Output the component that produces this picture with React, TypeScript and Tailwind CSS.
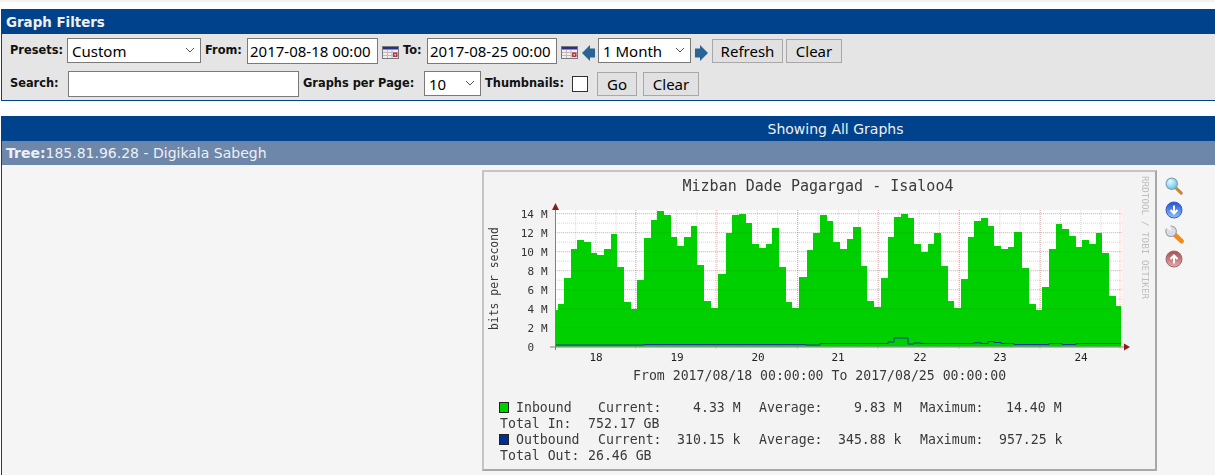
// Cacti graph view: filter panel, tree header and one RRD graph

// ---------------------------------------------------------------------------
// Graph data (segment end x, top y)
// ---------------------------------------------------------------------------

const INBOUND: [number, number][] = [
  [558, 310], [564, 304], [571, 278], [577, 249], [584, 240], [591, 242], [597, 253], [604, 255],
  [611, 249], [617, 234], [624, 267], [631, 302], [637, 309], [644, 280], [651, 238], [657, 220],
  [664, 211], [671, 215], [677, 237], [684, 246], [691, 237], [697, 226], [704, 265], [711, 301],
  [718, 308], [726, 274], [732, 233], [739, 215], [746, 214], [752, 223], [759, 244], [766, 248],
  [772, 244], [779, 228], [786, 267], [792, 302], [799, 308], [807, 277], [813, 250], [820, 233],
  [827, 215], [833, 221], [840, 242], [847, 249], [853, 239], [861, 227], [867, 266], [874, 301],
  [881, 307], [888, 278], [894, 237], [901, 217], [908, 214], [914, 218], [921, 244], [928, 252],
  [934, 244], [941, 233], [948, 266], [954, 301], [961, 308], [968, 279], [974, 237], [981, 221],
  [988, 218], [994, 226], [1001, 246], [1008, 249], [1014, 247], [1022, 232], [1029, 268], [1036, 304],
  [1042, 310], [1049, 287], [1056, 249], [1062, 224], [1069, 229], [1076, 236], [1082, 247], [1089, 240],
  [1096, 244], [1102, 233], [1109, 253], [1116, 296], [1121, 306],
];

const OUTBOUND: [number, number][] = [
  [644, 345], [806, 344.5], [820, 345], [888, 343.5], [894, 342], [901, 338], [908, 338], [914, 344],
  [921, 343], [974, 343.5], [981, 342.8], [988, 343.5], [994, 341.5], [1001, 342.5], [1014, 343.5],
  [1049, 344.5], [1062, 343.5], [1076, 344.5], [1121, 343.5],
];

const stepPath = (points: [number, number][]) => {
  let x = 555.5;
  return points.map(([end, y]) => {
    const seg = `L${x} ${y} L${end} ${y}`;
    x = end;
    return seg;
  }).join(' ');
};

const Y_TICKS = [0, 2, 4, 6, 8, 10, 12, 14];
const DAYS = [[18, 596], [19, 677], [20, 758], [21, 838], [22, 920], [23, 1000], [24, 1081]];
const MAJOR_X = [555.5, 635.5, 716, 797.5, 878, 959, 1040, 1120];
const PLOT_BOTTOM = 346.7;
const yFor = (m: number) => PLOT_BOTTOM - m * 9.5;

const MONO = "'DejaVu Sans Mono', 'Liberation Mono', monospace";

function Legend({ x, y, children, fill = '#3a3a3a' }: { x: number; y: number; children: string; fill?: string }) {
  return <text x={x} y={y} fontSize="13.2" fill={fill} fontFamily={MONO}>{children}</text>;
}

function RrdGraph() {
  const minorX: number[] = [];
  for (let x = 555.5; x < 1121; x += 20.2) minorX.push(x);
  const minorY: number[] = [];
  for (let m = 1; m < 15; m += 2) minorY.push(yFor(m));

  return (
    <svg width="671" height="297" viewBox="484 172 671 297" className="block blur-[0.3px]">
      <rect x="484" y="172" width="671" height="297" fill="#f3f3f3" />
      <text x="818" y="191" textAnchor="middle" fontSize="15" fill="#3a3a3a" fontFamily={MONO}>
        Mizban Dade Pagargad - Isaloo4
      </text>
      <text transform="translate(1142 176) rotate(90)" fontSize="9.3" fill="#bdbdbd" fontFamily={MONO}>
        RRDTOOL / TOBI OETIKER
      </text>
      <text transform="translate(498 330) rotate(-90)" fontSize="11.4" fill="#3a3a3a" fontFamily={MONO}>
        bits per second
      </text>

      {/* plot: grid under the area, faint major lines over it */}
      <rect x="555" y="210" width="567" height="137" fill="#ffffff" />
      {minorY.map((y) => (
        <line key={y} x1="555" x2="1122" y1={y} y2={y} stroke="#000" strokeOpacity="0.16" strokeDasharray="1 1" />
      ))}
      {minorX.map((x) => (
        <line key={x} x1={x} x2={x} y1="210" y2="347" stroke="#000" strokeOpacity="0.16" strokeDasharray="1 1" />
      ))}
      {Y_TICKS.slice(1).map((m) => (
        <line key={m} x1="555" x2="1122" y1={yFor(m)} y2={yFor(m)} stroke="#e00000" strokeOpacity="0.25" strokeDasharray="1 1" />
      ))}
      {MAJOR_X.map((x) => (
        <line key={x} x1={x} x2={x} y1="210" y2="350" stroke="#e00000" strokeOpacity="0.25" strokeDasharray="1 1" />
      ))}
      <path d={`M555.5 ${PLOT_BOTTOM} ${stepPath(INBOUND)} L1121 ${PLOT_BOTTOM} Z`} fill="#00cf00" />
      {Y_TICKS.slice(1).map((m) => (
        <line key={m} x1="555" x2="1121" y1={yFor(m)} y2={yFor(m)} stroke="#800000" strokeOpacity="0.07" />
      ))}
      <path d={`M555.5 345 ${stepPath(OUTBOUND)}`} fill="none" stroke="#0a3a9a" strokeWidth="1" />

      {/* axes */}
      <line x1="550" x2="1124" y1="347" y2="347" stroke="#808080" />
      <line x1="555.5" x2="555.5" y1="208" y2="350" stroke="#808080" />
      <polygon points="552,210 559,210 555.5,203" fill="#8c1c1c" />
      <polygon points="1124,343.5 1124,350.5 1130,347" fill="#8c1c1c" />

      {Y_TICKS.map((m) => (
        <g key={m} fontSize="11" fill="#333" fontFamily={MONO}>
          <text x="534" y={yFor(m) + 4} textAnchor="end">{m}</text>
          {m > 0 && <text x="541" y={yFor(m) + 4}>M</text>}
        </g>
      ))}
      {DAYS.map(([label, x]) => (
        <text key={label} x={x} y="361" textAnchor="middle" fontSize="11" fill="#222" fontFamily={MONO}>{label}</text>
      ))}

      <text x="633" y="380" fontSize="13.2" fill="#3a3a3a" fontFamily={MONO}>
        From 2017/08/18 00:00:00 To 2017/08/25 00:00:00
      </text>

      {/* legend */}
      <rect x="499.5" y="402.5" width="9" height="10" fill="#00cf00" stroke="#222" />
      <rect x="499.5" y="434.5" width="9" height="10" fill="#00308f" stroke="#222" />
      <Legend x={516} y={412}>Inbound</Legend>
      <Legend x={598} y={412}>Current:</Legend>
      <Legend x={693} y={412}>4.33 M</Legend>
      <Legend x={759} y={412}>Average:</Legend>
      <Legend x={854} y={412}>9.83 M</Legend>
      <Legend x={920} y={412}>Maximum:</Legend>
      <Legend x={1006} y={412}>14.40 M</Legend>
      <Legend x={500} y={428}>Total In:</Legend>
      <Legend x={588} y={428}>752.17 GB</Legend>
      <Legend x={516} y={444}>Outbound</Legend>
      <Legend x={598} y={444}>Current:</Legend>
      <Legend x={677} y={444}>310.15 k</Legend>
      <Legend x={759} y={444}>Average:</Legend>
      <Legend x={838} y={444}>345.88 k</Legend>
      <Legend x={920} y={444}>Maximum:</Legend>
      <Legend x={999} y={444}>957.25 k</Legend>
      <Legend x={500} y={460}>Total Out:</Legend>
      <Legend x={588} y={460}>26.46 GB</Legend>
    </svg>
  );
}

// ---------------------------------------------------------------------------
// Small icons
// ---------------------------------------------------------------------------

function CalendarIcon({ className }: { className: string }) {
  return (
    <svg width="17" height="13" viewBox="0 0 17 13" className={`shrink-0 ${className}`}>
      <rect x="0.5" y="0.5" width="16" height="12" fill="#f1eeee" stroke="#77777f" />
      <rect x="1" y="1" width="15" height="2.5" fill="#2a2f8f" />
      <path d="M1 6.5H16M1 9.5H16M5.5 4V12M10 4V12" stroke="#c9b6b6" strokeWidth="1" />
      <rect x="11" y="6.5" width="4.5" height="4.5" fill="#b23a48" />
      <rect x="12.5" y="8" width="1.5" height="1.5" fill="#f3d4d4" />
    </svg>
  );
}

function ShiftArrow({ right = false }: { right?: boolean }) {
  return (
    <svg width="13" height="16" viewBox="0 0 13 16" className="mt-[4px] shrink-0">
      <polygon
        points={right ? '0,3.5 5,3.5 5,0 13,8 5,16 5,12.5 0,12.5' : '13,3.5 8,3.5 8,0 0,8 8,16 8,12.5 13,12.5'}
        fill="#2a6496"
      />
    </svg>
  );
}

function ZoomIcon() {
  return (
    <svg width="18" height="18" viewBox="0 0 20 20" className="block">
      <defs>
        <radialGradient id="lens" cx="0.35" cy="0.3" r="0.8">
          <stop offset="0" stopColor="#e4fbff" />
          <stop offset="1" stopColor="#58bfe8" />
        </radialGradient>
      </defs>
      <line x1="11.5" y1="11.5" x2="18" y2="18" stroke="#bf8a3e" strokeWidth="3.4" strokeLinecap="round" />
      <circle cx="7.5" cy="7.5" r="6.3" fill="url(#lens)" stroke="#7ba6bd" strokeWidth="1.3" />
    </svg>
  );
}

function RoundArrowIcon({ up = false }: { up?: boolean }) {
  const id = up ? 'roundUp' : 'roundDown';
  return (
    <svg width="18" height="18" viewBox="0 0 18 18" className="block">
      <defs>
        <linearGradient id={id} x1="0" y1="0" x2="0" y2="1">
          <stop offset="0" stopColor={up ? '#a05050' : '#1f4fd8'} />
          <stop offset="1" stopColor={up ? '#e8a8a8' : '#8fc0fa'} />
        </linearGradient>
      </defs>
      <circle cx="9" cy="9" r="8" fill={`url(#${id})`} stroke={up ? '#a06a6a' : '#3a60c0'} />
      <path
        d={up ? 'M9 13.5V6M5.5 9L9 5.5L12.5 9' : 'M9 4.5V12M5.5 9L9 12.5L12.5 9'}
        fill="none"
        stroke="#ffffff"
        strokeWidth="2"
      />
    </svg>
  );
}

function WrenchIcon() {
  return (
    <svg width="19" height="19" viewBox="0 0 20 20" className="block">
      <line x1="9" y1="9" x2="17.4" y2="17" stroke="#f08a1d" strokeWidth="5" strokeLinecap="round" />
      <circle cx="6.4" cy="6.6" r="5.6" fill="#dcdce4" stroke="#9c9caa" strokeWidth="1.1" />
      <polygon points="0,3 6.8,6.2 5.4,0 0,0" fill="#f5f5f5" />
    </svg>
  );
}

function SelectChevron() {
  return (
    <svg width="10" height="6" viewBox="0 0 10 6" className="pointer-events-none absolute right-[6px] top-[9px]">
      <polyline points="1,1 5,5 9,1" fill="none" stroke="#555" strokeWidth="1" />
    </svg>
  );
}

// ---------------------------------------------------------------------------
// Form controls
// ---------------------------------------------------------------------------

const labelCls = "mt-px font-['DejaVu_Sans',sans-serif] text-[11.4px] font-bold text-[#111] whitespace-nowrap";
const fieldCls = "border border-[#7a7a7a] bg-white pt-px font-['Noto_Sans',sans-serif] text-[15px] text-black outline-none";
const buttonCls = "h-[24px] border border-[#a8a8a8] bg-[#e1e1e1] pb-[2px] font-['Noto_Sans',sans-serif] text-[15px] text-black";

function Select({ value, className }: { value: string; className: string }) {
  return (
    <div className={`relative h-[25px] shrink-0 ${className}`}>
      <select defaultValue={value} className={`${fieldCls} h-full w-full appearance-none pl-[4px]`}>
        <option>{value}</option>
      </select>
      <SelectChevron />
    </div>
  );
}

// ---------------------------------------------------------------------------
// Page
// ---------------------------------------------------------------------------

export default function App() {
  return (
    <div className="h-[475px] w-[1215px] overflow-hidden bg-white">
      <div className="h-[2px] bg-[#f2f2f2]" />

      {/* Graph filters */}
      <div className="ml-px mt-[7px] h-[92px] border-b border-l border-[#00438c]">
        <div className="flex h-[25px] items-center bg-[#00438c] pl-[4px] pt-[3px] font-['DejaVu_Sans',sans-serif] text-[13.4px] font-bold text-[#f0f0f0]">
          Graph Filters
        </div>
        <div className="h-[66px] bg-[#e5e5e5] pl-[8px]">
          <div className="flex h-[33px] items-center">
            <span className={`${labelCls} mr-[5px] w-[52px]`}>Presets:</span>
            <Select value="Custom" className="w-[134px]" />
            <span className={`${labelCls} ml-[4px] mr-[4px] w-[38px]`}>From:</span>
            <input readOnly value="2017-08-18 00:00" className={`${fieldCls} h-[26px] w-[131px] shrink-0 pl-[2px]`} />
            <CalendarIcon className="ml-[4px] mt-[4px]" />
            <span className={`${labelCls} ml-[4px] mr-[3px] w-[21px]`}>To:</span>
            <input readOnly value="2017-08-25 00:00" className={`${fieldCls} h-[26px] w-[130px] shrink-0 pl-[2px]`} />
            <CalendarIcon className="ml-[4px] mr-[4px] mt-[4px]" />
            <ShiftArrow />
            <Select value="1 Month" className="ml-[3px] mr-[4px] w-[93px]" />
            <ShiftArrow right />
            <button type="button" className={`${buttonCls} ml-[4px] w-[71px]`}>Refresh</button>
            <button type="button" className={`${buttonCls} ml-[3px] w-[56px]`}>Clear</button>
          </div>
          <div className="flex h-[33px] items-center">
            <span className={`${labelCls} mr-[9px] w-[49px]`}>Search:</span>
            <input readOnly value="" className={`${fieldCls} h-[26px] w-[231px] shrink-0`} />
            <span className={`${labelCls} ml-[4px] mr-[9px] w-[112px]`}>Graphs per Page:</span>
            <Select value="10" className="mr-[4px] w-[57px]" />
            <span className={`${labelCls} mr-[8px] w-[79px]`}>Thumbnails:</span>
            <span className="h-[16px] w-[16px] shrink-0 border border-[#333] bg-white" />
            <button type="button" className={`${buttonCls} ml-[9px] w-[40px]`}>Go</button>
            <button type="button" className={`${buttonCls} ml-[6px] w-[56px]`}>Clear</button>
          </div>
        </div>
      </div>

      {/* Graph list */}
      <div className="ml-px mt-[15px] border-l border-[#00438c]">
        <div className="flex h-[25px] items-center justify-center bg-[#00438c] pl-[454px] pt-px font-['DejaVu_Sans',sans-serif] text-[14px] text-[#f0f0f0]">
          Showing All Graphs
        </div>
        <div className="flex h-[24px] items-center bg-[#6d87ab] pl-[4px] font-['DejaVu_Sans',sans-serif] text-[14px] text-[#eef0f4]">
          <span className="font-bold">Tree:</span>185.81.96.28 - Digikala Sabegh
        </div>
        <div className="flex h-[310px] items-start bg-[#f5f5f5] pl-[480px] pt-[5px]">
          <div className="border-2 border-[#c4c4c4] border-b-[#a8a8a8] border-r-[#a8a8a8]">
            <RrdGraph />
          </div>
          <div className="ml-[8px] mt-[7px] flex flex-col items-start gap-[6px]">
            <ZoomIcon />
            <RoundArrowIcon />
            <WrenchIcon />
            <RoundArrowIcon up />
          </div>
        </div>
      </div>
    </div>
  );
}
